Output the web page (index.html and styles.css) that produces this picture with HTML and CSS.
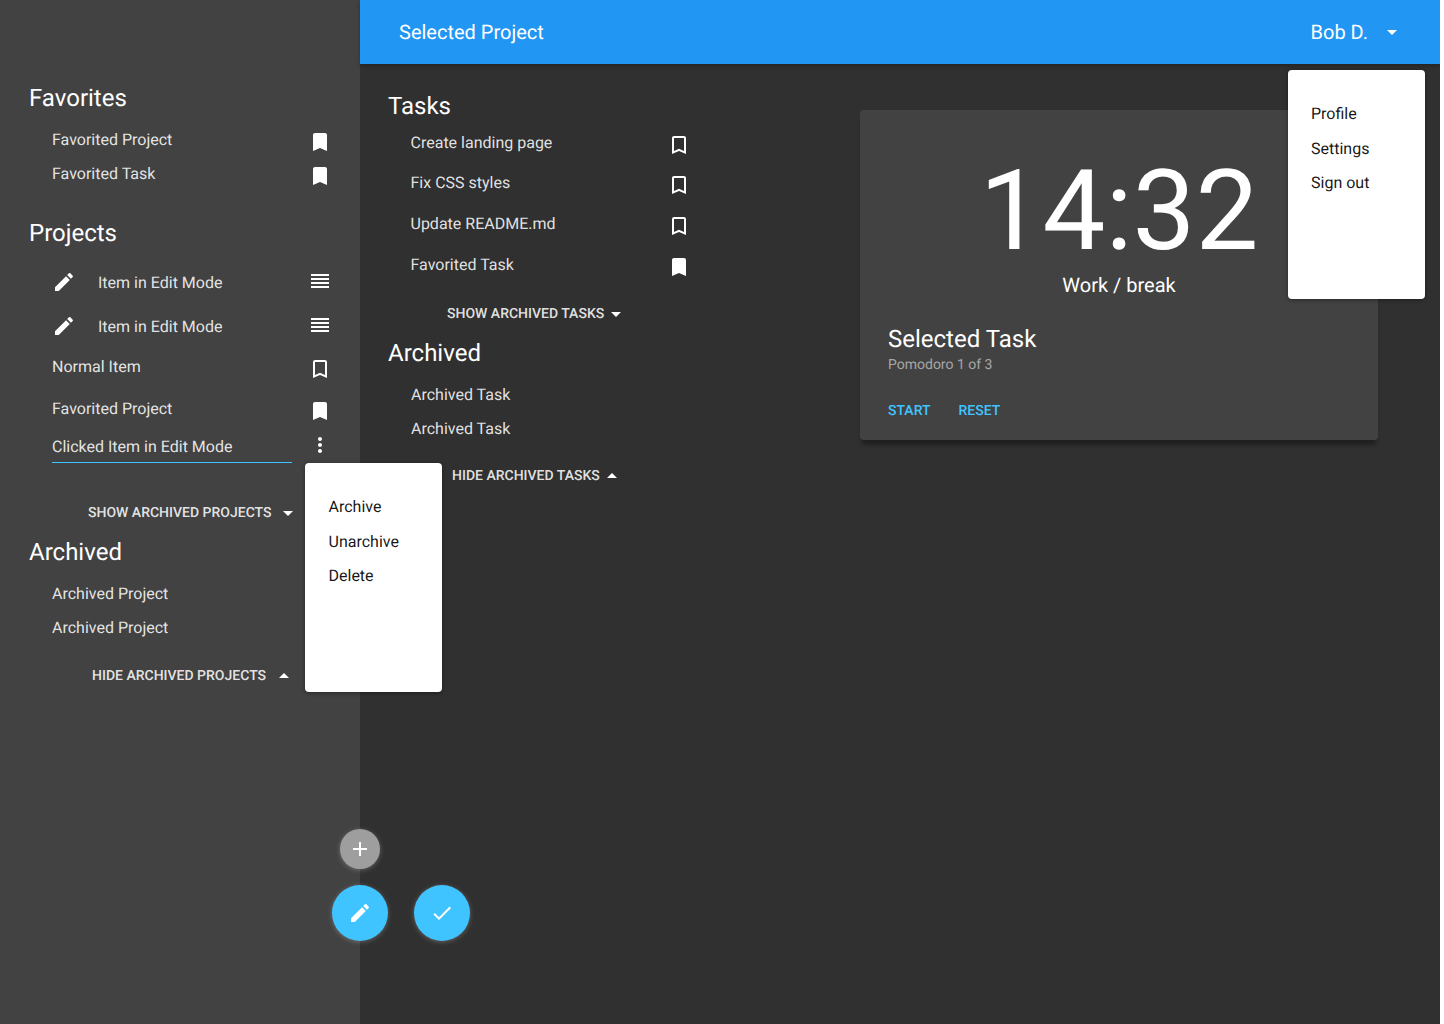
FILE: index.html
```html
<!DOCTYPE html>
<html lang="en">
<head>
    <meta charset="UTF-8">
    <meta name="viewport" content="width=device-width, initial-scale=1.0">
    <title>Pomodoro</title>
    <link rel="stylesheet" href="styles.css">
</head>
<body>

<svg class="icon-defs" width="0" height="0">
    <symbol id="i-bookmark" viewBox="0 0 24 24"><path d="M17 3H7c-1.1 0-1.99.9-1.99 2L5 21l7-3 7 3V5c0-1.1-.9-2-2-2z"/></symbol>
    <symbol id="i-bookmark-border" viewBox="0 0 24 24"><path d="M17 3H7c-1.1 0-1.99.9-1.99 2L5 21l7-3 7 3V5c0-1.1-.9-2-2-2zm0 15l-5-2.18L7 18V5h10v13z"/></symbol>
    <symbol id="i-edit" viewBox="0 0 24 24"><path d="M3 17.25V21h3.75L17.81 9.94l-3.75-3.75L3 17.25zM20.71 7.04c.39-.39.39-1.02 0-1.41l-2.34-2.34c-.39-.39-1.02-.39-1.41 0l-1.83 1.83 3.75 3.75 1.83-1.83z"/></symbol>
    <symbol id="i-reorder" viewBox="0 0 24 24"><path d="M3 15h18v-2H3v2zm0 4h18v-2H3v2zm0-8h18V9H3v2zm0-6v2h18V5H3z"/></symbol>
    <symbol id="i-more" viewBox="0 0 24 24"><path d="M12 8c1.1 0 2-.9 2-2s-.9-2-2-2-2 .9-2 2 .9 2 2 2zm0 2c-1.1 0-2 .9-2 2s.9 2 2 2 2-.9 2-2-.9-2-2-2zm0 6c-1.1 0-2 .9-2 2s.9 2 2 2 2-.9 2-2-.9-2-2-2z"/></symbol>
    <symbol id="i-down" viewBox="0 0 24 24"><path d="M7 10l5 5 5-5z"/></symbol>
    <symbol id="i-up" viewBox="0 0 24 24"><path d="M7 14l5-5 5 5z"/></symbol>
    <symbol id="i-add" viewBox="0 0 24 24"><path d="M19 13h-6v6h-2v-6H5v-2h6V5h2v6h6v2z"/></symbol>
    <symbol id="i-check" viewBox="0 0 24 24"><path d="M9 16.17L4.83 12l-1.42 1.41L9 19 21 7l-1.41-1.41z"/></symbol>
</svg>

<div class="app">
    <aside class="sidebar">
        <h2 class="heading">Favorites</h2>
        <div class="row"><span class="label">Favorited Project</span><svg class="icon mark"><use href="#i-bookmark"/></svg></div>
        <div class="row"><span class="label">Favorited Task</span><svg class="icon mark"><use href="#i-bookmark"/></svg></div>

        <h2 class="heading projects-heading">Projects</h2>
        <div class="row row-edit first-edit"><svg class="icon pencil"><use href="#i-edit"/></svg><span class="label">Item in Edit Mode</span><svg class="icon handle"><use href="#i-reorder"/></svg></div>
        <div class="row row-edit"><svg class="icon pencil"><use href="#i-edit"/></svg><span class="label">Item in Edit Mode</span><svg class="icon handle"><use href="#i-reorder"/></svg></div>
        <div class="row row-normal"><span class="label">Normal Item</span><svg class="icon mark"><use href="#i-bookmark-border"/></svg></div>
        <div class="row row-fav"><span class="label">Favorited Project</span><svg class="icon mark"><use href="#i-bookmark"/></svg></div>
        <div class="row row-clicked"><span class="label underlined">Clicked Item in Edit Mode</span><svg class="icon more"><use href="#i-more"/></svg></div>

        <div class="toggle show-projects">Show archived projects <svg class="icon"><use href="#i-down"/></svg></div>

        <h2 class="heading archived-heading">Archived</h2>
        <div class="row"><span class="label">Archived Project</span></div>
        <div class="row"><span class="label">Archived Project</span></div>
        <div class="toggle hide-projects">Hide archived projects <svg class="icon"><use href="#i-up"/></svg></div>
    </aside>

    <div class="main">
        <header class="appbar">
            <span class="title">Selected Project</span>
            <span class="user">Bob D. <svg class="icon"><use href="#i-down"/></svg></span>
        </header>

        <div class="content">
            <section class="tasks">
                <h2 class="heading">Tasks</h2>
                <div class="task first-task"><span class="label">Create landing page</span><svg class="icon mark"><use href="#i-bookmark-border"/></svg></div>
                <div class="task"><span class="label">Fix CSS styles</span><svg class="icon mark"><use href="#i-bookmark-border"/></svg></div>
                <div class="task"><span class="label">Update README.md</span><svg class="icon mark"><use href="#i-bookmark-border"/></svg></div>
                <div class="task"><span class="label">Favorited Task</span><svg class="icon mark"><use href="#i-bookmark"/></svg></div>

                <div class="toggle show-tasks">Show archived tasks <svg class="icon"><use href="#i-down"/></svg></div>

                <h2 class="heading archived-heading">Archived</h2>
                <div class="row"><span class="label">Archived Task</span></div>
                <div class="row"><span class="label">Archived Task</span></div>
                <div class="toggle hide-tasks">Hide archived tasks <svg class="icon"><use href="#i-up"/></svg></div>
            </section>

            <section class="card">
                <div class="timer">14:32</div>
                <div class="phase">Work / break</div>
                <h2 class="task-name">Selected Task</h2>
                <div class="task-count">Pomodoro 1 of 3</div>
                <div class="actions">
                    <span class="action">Start</span>
                    <span class="action">Reset</span>
                </div>
            </section>
        </div>
    </div>

    <ul class="menu user-menu">
        <li>Profile</li>
        <li>Settings</li>
        <li>Sign out</li>
    </ul>

    <ul class="menu item-menu">
        <li>Archive</li>
        <li>Unarchive</li>
        <li>Delete</li>
    </ul>

    <button class="fab fab-small"><svg class="icon"><use href="#i-add"/></svg></button>
    <button class="fab fab-edit"><svg class="icon"><use href="#i-edit"/></svg></button>
    <button class="fab fab-check"><svg class="icon"><use href="#i-check"/></svg></button>
</div>

</body>
</html>
```

FILE: styles.css
```css
html {
    background-color: #fff;
}
body {
    font-family: Roboto, Arial, sans-serif;
    margin: 0;
    padding: 0;
    color: #fff;
    text-rendering: geometricPrecision;
}
.icon-defs {
    position: absolute;
}
.app {
    position: relative;
    display: flex;
    width: 1440px;
    height: 1024px;
    overflow: hidden;
    background-color: #303030;
}
.icon {
    display: block;
    width: 24px;
    height: 24px;
    flex: none;
    fill: currentColor;
}
.heading {
    margin: 0 0 2px;
    font-size: 24px;
    font-weight: 400;
    line-height: 30px;
}
.archived-heading {
    margin-top: 12px;
}
.label {
    font-size: 16px;
    line-height: 24px;
    color: rgba(255, 255, 255, 0.87);
}
.toggle {
    display: flex;
    align-items: center;
    font-size: 14px;
    font-weight: 500;
    line-height: 24px;
    text-transform: uppercase;
    color: rgba(255, 255, 255, 0.87);
}
.toggle .icon {
    color: #fff;
}

/* sidebar */
.sidebar {
    width: 360px;
    height: 1024px;
    flex: none;
    box-sizing: border-box;
    padding: 83px 28px 0 29px;
    background-color: #424242;
}
.row {
    display: flex;
    align-items: center;
    justify-content: space-between;
    height: 34px;
    padding-left: 23px;
}
.heading + .row {
    margin-top: 10px;
}
.row .mark {
    margin-top: 4px;
}
.projects-heading {
    margin-top: 27px;
}
.row-edit {
    height: 44px;
    justify-content: flex-start;
}
.heading + .first-edit {
    margin-top: 13px;
}
.pencil {
    margin: 0 22px 2px 0;
}
.handle {
    margin: 0 0 4px auto;
}
.row-normal {
    height: 36px;
}
.row-fav {
    height: 42px;
    margin-top: 3px;
}
.row-clicked {
    height: 34px;
    align-items: flex-start;
    padding-top: 5px;
    box-sizing: border-box;
}
.row-clicked .more {
    margin-top: -2px;
}
.underlined {
    width: 240px;
    height: 27px;
    margin-right: 16px;
    border-bottom: 1px solid #40c4ff;
}
.show-projects {
    margin: 37px 0 0 59px;
}
.show-projects .icon {
    margin-left: 5px;
}
.hide-projects {
    margin: 19px 0 0 63px;
}
.hide-projects .icon {
    margin-left: 6px;
}

/* top bar */
.main {
    flex: 1;
    min-width: 0;
}
.appbar {
    display: flex;
    align-items: center;
    justify-content: space-between;
    height: 64px;
    padding: 0 36px 0 39px;
    background-color: #2196f3;
    box-shadow: 0 2px 4px rgba(0, 0, 0, 0.25);
}
.title,
.user {
    font-size: 20px;
    line-height: 28px;
}
.user {
    display: flex;
    align-items: center;
}
.user .icon {
    margin-left: 12px;
}

/* tasks and timer */
.content {
    display: flex;
    align-items: flex-start;
}
.tasks {
    width: 303px;
    flex: none;
    padding: 27px 0 0 28px;
}
.task {
    display: flex;
    align-items: center;
    justify-content: space-between;
    height: 41px;
    padding-left: 22.5px;
    padding-right: 0.5px;
}
.first-task {
    height: 39px;
}
.task .mark {
    margin-top: 5px;
}
.show-tasks {
    margin: 17px 0 0 59px;
}
.hide-tasks {
    margin: 18px 0 0 64px;
}
.card {
    width: 518px;
    height: 330px;
    flex: none;
    box-sizing: border-box;
    margin: 46px 0 0 169px;
    padding: 0 28px;
    border-radius: 4px;
    background-color: #424242;
    box-shadow: 0 7px 4px -2px rgba(0, 0, 0, 0.35);
}
.timer {
    margin-top: 43px;
    font-size: 112px;
    font-weight: 400;
    line-height: 118px;
    text-align: center;
}
.phase {
    font-size: 20px;
    line-height: 28px;
    text-align: center;
}
.task-name {
    margin: 24px 0 0;
    font-size: 24px;
    font-weight: 400;
    line-height: 32px;
}
.task-count {
    font-size: 14px;
    line-height: 20px;
    color: rgba(255, 255, 255, 0.54);
}
.actions {
    display: flex;
    gap: 28px;
    margin-top: 26px;
}
.action {
    font-size: 14px;
    font-weight: 500;
    line-height: 20px;
    text-transform: uppercase;
    color: #40c4ff;
}

/* menus */
.menu {
    position: absolute;
    width: 137px;
    height: 229px;
    box-sizing: border-box;
    margin: 0;
    padding: 0 0 0 23px;
    list-style: none;
    border-radius: 4px;
    background-color: #fff;
    color: rgba(0, 0, 0, 0.92);
    font-size: 16px;
    line-height: 24px;
    box-shadow: 0 1px 4px rgba(0, 0, 0, 0.4);
}
.menu li + li {
    margin-top: 10.5px;
}
.user-menu {
    left: 1288px;
    top: 70px;
    padding-top: 32px;
}
.item-menu {
    left: 305px;
    top: 463px;
    padding-top: 32px;
    padding-left: 23.5px;
}

/* floating buttons */
.fab {
    position: absolute;
    display: flex;
    align-items: center;
    justify-content: center;
    width: 56px;
    height: 56px;
    padding: 0;
    border: none;
    border-radius: 50%;
    background-color: #40c4ff;
    color: #fff;
    box-shadow: 0 1px 5px rgba(255, 255, 255, 0.25);
}
.fab-small {
    left: 340px;
    top: 829px;
    width: 40px;
    height: 40px;
    background-color: #9e9e9e;
}
.fab-edit {
    left: 332px;
    top: 885px;
}
.fab-check {
    left: 414px;
    top: 885px;
}
```
